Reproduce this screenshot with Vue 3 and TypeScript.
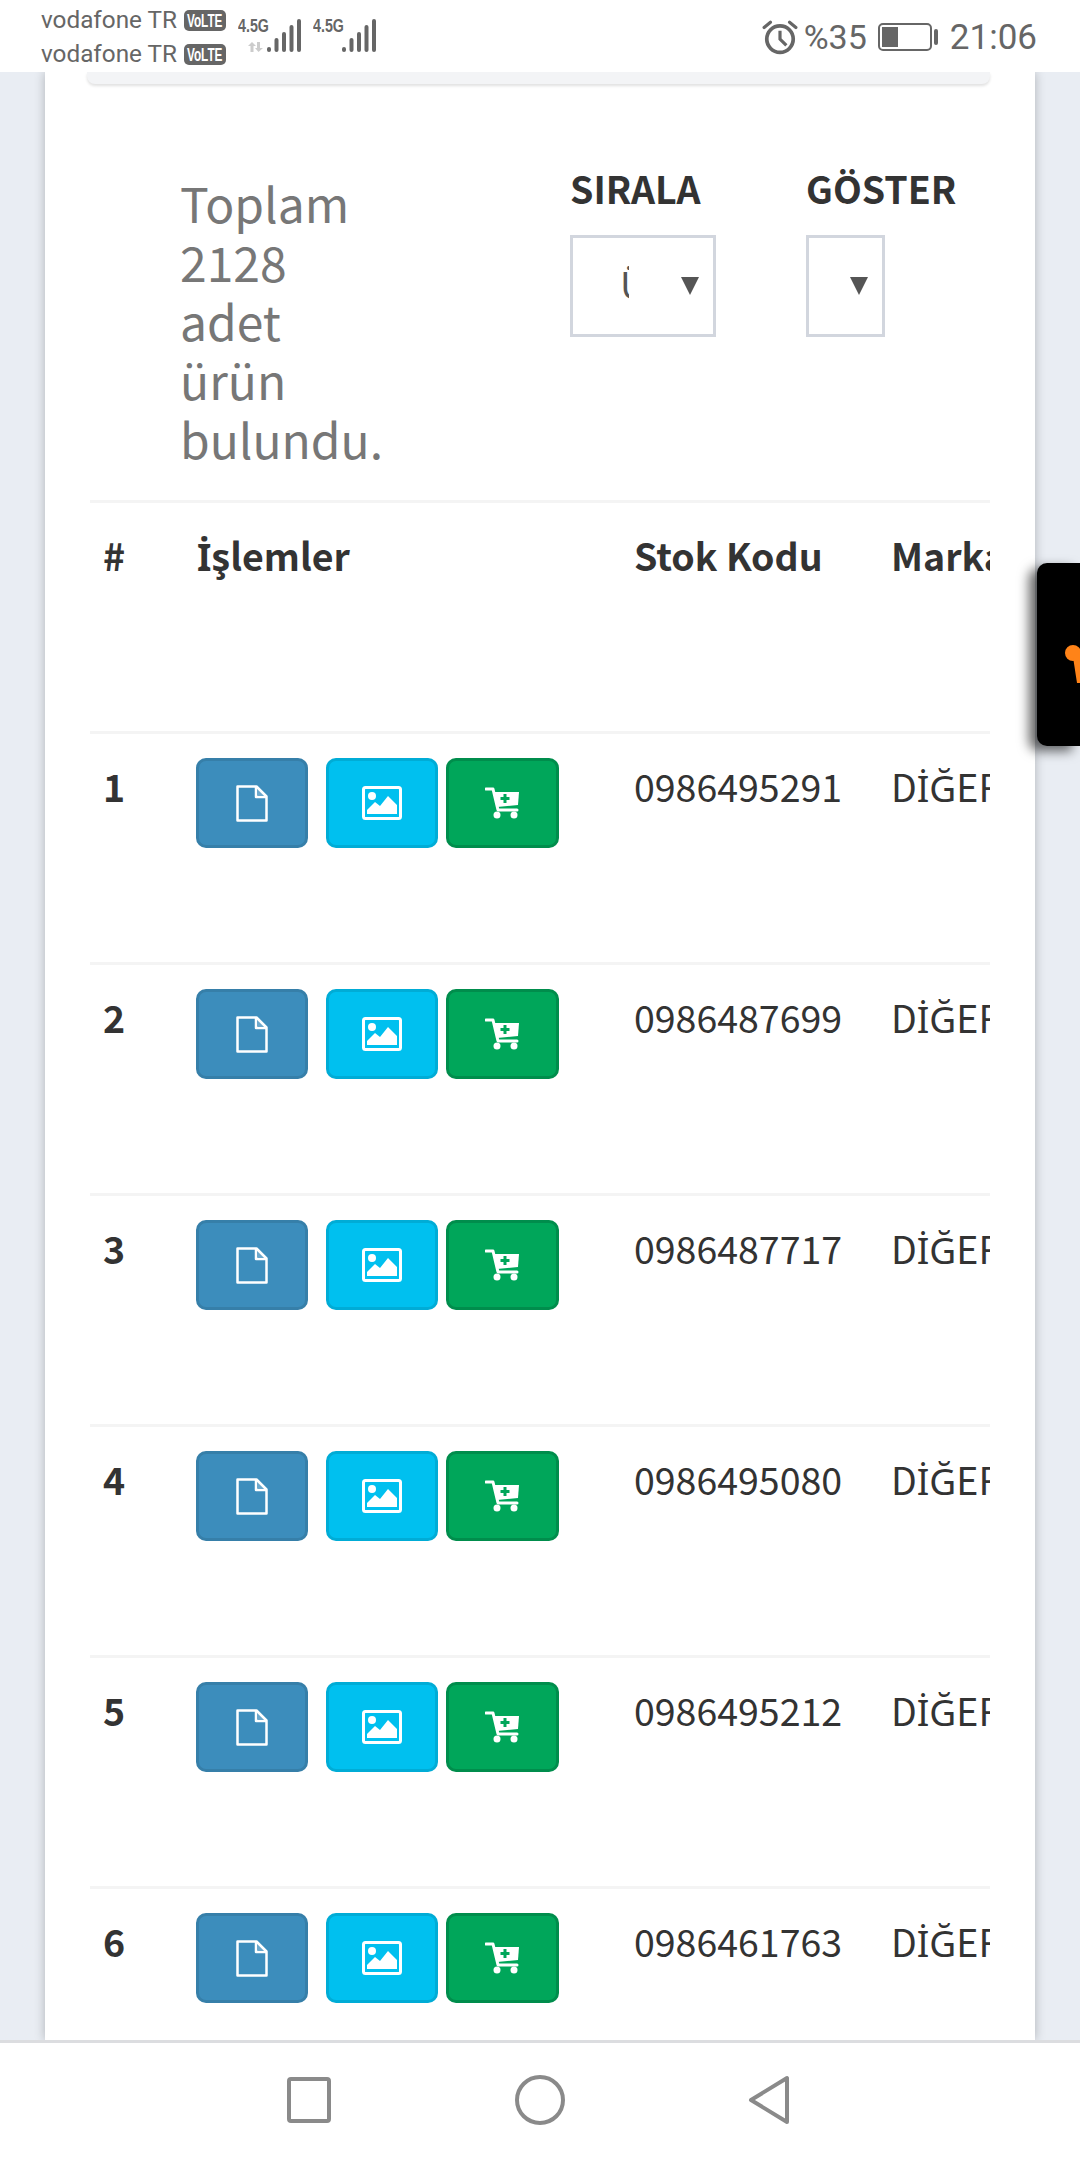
<script setup lang="ts">
const rows = [
  { no: 1, code: '0986495291' },
  { no: 2, code: '0986487699' },
  { no: 3, code: '0986487717' },
  { no: 4, code: '0986495080' },
  { no: 5, code: '0986495212' },
  { no: 6, code: '0986461763' }
];

const signalBars = [
  { x: 0, y: 28, h: 5 },
  { x: 7.5, y: 19, h: 14 },
  { x: 15, y: 13, h: 20 },
  { x: 22.5, y: 6, h: 27 },
  { x: 30, y: 0, h: 33 }
];
</script>

<template>
  <div class="screen">
    <header class="status-bar">
      <div class="carriers">
        <div class="carrier">vodafone TR <span class="volte"><span>VoLTE</span></span></div>
        <div class="carrier">vodafone TR <span class="volte"><span>VoLTE</span></span></div>
      </div>
      <div class="network">
        <span class="net-label">4.5G</span>
        <svg class="signal" width="34" height="33" viewBox="0 0 34 33">
          <rect v-for="b in signalBars" :key="b.x" :x="b.x" :y="b.y" width="4" :height="b.h" rx="2" fill="#666" />
        </svg>
        <svg class="updown" width="16" height="10" viewBox="0 0 16 10">
          <path d="M4 0 L8 4 H5.500 V10 H2.500 V4 H0 Z M9 0 H12 V6 H15 L10.500 10 L7 6 H9 Z" fill="#ccc" />
        </svg>
      </div>
      <div class="network">
        <span class="net-label">4.5G</span>
        <svg class="signal" width="34" height="33" viewBox="0 0 34 33">
          <rect v-for="b in signalBars" :key="b.x" :x="b.x" :y="b.y" width="4" :height="b.h" rx="2" fill="#666" />
        </svg>
      </div>
      <div class="status-right">
        <svg width="36" height="36" viewBox="0 0 34 34" fill="none" stroke="#666">
          <circle cx="17" cy="19" r="12.500" stroke-width="3.500" />
          <path d="M17 11 V19 L23 25" stroke-width="3" />
          <path d="M2 8 L8 3 M32 8 L26 3" stroke-width="3" stroke-linecap="round" />
        </svg>
        <span class="battery-text">%35</span>
        <div class="battery"><div class="battery-fill" style="width: 35%"></div></div>
        <div class="battery-nub"></div>
        <span class="clock">21:06</span>
      </div>
    </header>

    <main class="page">
      <section class="card">
        <div class="panel-end"></div>

        <div class="toolbar">
          <p class="total">Toplam 2128 adet ürün bulundu.</p>
          <div class="filter sort">
            <label>SIRALA</label>
            <div class="select">
              <span class="select-value">Ü</span>
              <span class="arrow"></span>
            </div>
          </div>
          <div class="filter show">
            <label>GÖSTER</label>
            <div class="select">
              <span class="arrow"></span>
            </div>
          </div>
        </div>

        <div class="table-wrap">
          <table>
            <colgroup>
              <col style="width: 92px" />
              <col style="width: 439px" />
              <col style="width: 257px" />
              <col style="width: 300px" />
            </colgroup>
            <thead>
              <tr>
                <th>#</th>
                <th class="actions-head"><span class="tr-glyph">İ</span>şlemler</th>
                <th>Stok Kodu</th>
                <th>Marka</th>
              </tr>
            </thead>
            <tbody>
              <tr v-for="row in rows" :key="row.no">
                <td class="no">{{ row.no }}</td>
                <td class="actions">
                  <div class="btn-group">
                    <button class="btn btn-doc">
                      <svg width="32" height="37" viewBox="0 0 32 37" fill="none" stroke="#fff" stroke-width="2.500" stroke-linejoin="round">
                        <path d="M1.500 1.500 H20.500 L30.500 11.500 V35.500 H1.500 Z" />
                        <path d="M20 2 V12 H30" />
                        <path d="M22 3.500 V10 H28.500 Z" fill="#fff" stroke="none" opacity=".25" />
                      </svg>
                    </button>
                    <button class="btn btn-image">
                      <svg width="40" height="34" viewBox="0 0 40 34" fill="none">
                        <rect x="1.500" y="1.500" width="37" height="31" rx="2" stroke="#fff" stroke-width="3" />
                        <circle cx="10" cy="10" r="4" fill="#fff" />
                        <path d="M5 28 V24 L13 16 L18 20 L26 10 L35 19 V28 Z" fill="#fff" />
                      </svg>
                    </button>
                    <button class="btn btn-cart">
                      <svg width="36" height="32" viewBox="0 0 36 32">
                        <path d="M1 2 H8 L13 23 H32" fill="none" stroke="#fff" stroke-width="3" stroke-linecap="round" stroke-linejoin="round" />
                        <path d="M8 5 H34 L33 18 L12 20 Z" fill="#fff" />
                        <path d="M20 7 V16 M15.500 11.500 H24.500" stroke="#00a65a" stroke-width="3" />
                        <circle cx="12" cy="28" r="3.500" fill="#fff" />
                        <circle cx="29" cy="28" r="3.500" fill="#fff" />
                      </svg>
                    </button>
                  </div>
                </td>
                <td>{{ row.code }}</td>
                <td>D<span class="tr-glyph">İĞ</span>ER</td>
              </tr>
            </tbody>
          </table>
        </div>
      </section>

      <aside class="side-tab">
        <div class="cone-ball"></div>
        <div class="cone"></div>
      </aside>
    </main>

    <nav class="nav-bar">
      <svg width="44" height="46" viewBox="0 0 44 46" fill="none" stroke="#8a8a8a" stroke-width="4">
        <rect x="2" y="2" width="40" height="42" rx="2" />
      </svg>
      <svg width="50" height="50" viewBox="0 0 50 50" fill="none" stroke="#8a8a8a" stroke-width="4">
        <circle cx="25" cy="25" r="23" />
      </svg>
      <svg width="42" height="50" viewBox="0 0 42 50" fill="none" stroke="#8a8a8a" stroke-width="4" stroke-linejoin="round">
        <path d="M39 3 V47 L3 25 Z" />
      </svg>
    </nav>
  </div>
</template>

<style scoped>
.screen {
  width: 1080px;
  height: 2160px;
  display: flex;
  flex-direction: column;
  overflow: hidden;
  background: #e9edf3;
  font-family: "Noto Sans CJK SC", "Noto Sans", sans-serif;
}

.status-bar {
  height: 72px;
  flex: none;
  display: flex;
  background: #fff;
  color: #666;
  font-family: Roboto, sans-serif;
  position: relative;
  z-index: 3;
}

.carriers {
  width: 197px;
  margin-left: 41px;
  padding-top: 3px;
}

.carrier {
  height: 34px;
  font-size: 24.300px;
  line-height: 34px;
  white-space: nowrap;
  display: flex;
  align-items: center;
  gap: 7px;
}

.volte {
  width: 42px;
  height: 21px;
  border-radius: 5px;
  background: #666;
  color: #fff;
  font-family: "Liberation Sans", sans-serif;
  font-size: 19px;
  font-weight: 700;
  line-height: 21px;
  display: flex;
  justify-content: center;
}

.volte span {
  display: block;
  transform: scaleX(0.62);
}

.network {
  width: 75px;
  position: relative;
  padding-top: 16px;
}

.net-label {
  font-family: "Liberation Sans", sans-serif;
  font-size: 19px;
  font-weight: 700;
  line-height: 20px;
  display: block;
  transform: scaleX(0.75);
  transform-origin: left;
}

.signal {
  position: absolute;
  left: 29px;
  top: 19px;
}

.updown {
  position: absolute;
  left: 10px;
  top: 42px;
}

.status-right {
  margin-left: auto;
  width: 330px;
  display: flex;
  align-items: center;
  padding: 2px 43px 0 0;
  box-sizing: border-box;
  justify-content: flex-end;
}

.battery-text {
  font-size: 34px;
  margin: 0 11px 0 6px;
}

.battery {
  width: 54px;
  height: 28px;
  border: 2px solid #666;
  border-radius: 5px;
  box-sizing: border-box;
  padding: 2px;
}

.battery-fill {
  height: 100%;
  background: #666;
}

.battery-nub {
  width: 4px;
  height: 16px;
  margin-left: 2px;
  background: #666;
  border-radius: 2px;
}

.clock {
  font-size: 35px;
  margin-left: 12px;
}

.page {
  flex: 1;
  min-height: 0;
  position: relative;
  padding: 0 45px;
}

.card {
  height: 100%;
  background: #fff;
  padding: 0 45px;
  box-shadow: 0 0 10px rgba(0, 0, 0, 0.25);
}

.panel-end {
  height: 12px;
  margin-left: -3px;
  background: #f3f4f6;
  border-radius: 0 0 8px 8px;
  box-shadow: 0 2px 3px rgba(0, 0, 0, 0.12);
}

.toolbar {
  height: 416px;
  box-sizing: border-box;
  display: flex;
  padding-top: 89px;
}

.total {
  width: 480px;
  margin: 0;
  padding: 0 180px 0 90px;
  box-sizing: border-box;
  font-size: 48px;
  line-height: 59px;
  color: #777;
}

.filter {
  margin-top: -11px;
}

.filter label {
  display: block;
  font-size: 37.500px;
  font-weight: 700;
  line-height: 52px;
  color: #333;
}

.sort {
  width: 236px;
}

.select {
  height: 102px;
  margin-top: 21px;
  border: 3px solid #d2d6de;
  box-sizing: border-box;
  position: relative;
}

.sort .select {
  width: 146px;
}

.show .select {
  width: 79px;
}

.select-value {
  position: absolute;
  left: 47px;
  top: 22px;
  width: 9px;
  overflow: hidden;
  font-size: 37px;
  line-height: 46px;
  color: #555;
}

.arrow {
  position: absolute;
  right: 14px;
  top: 39px;
  width: 0;
  height: 0;
  border-left: 9px solid transparent;
  border-right: 9px solid transparent;
  border-top: 18px solid #555;
}

.table-wrap {
  overflow: hidden;
}

table {
  width: 1088px;
  table-layout: fixed;
  border-collapse: separate;
  border-spacing: 0;
  color: #333;
}

th,
td {
  height: 231px;
  box-sizing: border-box;
  border-top: 3px solid #f4f4f4;
  padding: 26px 13px 0;
  vertical-align: top;
  text-align: left;
  font-size: 37.500px;
  line-height: 52px;
  white-space: nowrap;
}

th,
.no {
  font-weight: 700;
}

th.actions-head {
  padding-left: 15px;
}

/* the CJK face places the marks of these Turkish capitals badly */
.tr-glyph {
  font-family: "Noto Sans", sans-serif;
  font-size: 37px;
}

td.actions {
  padding: 24px 0 0 14px;
}

.btn-group {
  display: flex;
}

.btn {
  width: 112px;
  height: 90px;
  padding: 0;
  border-radius: 10px;
  border: 3px solid;
  display: flex;
  align-items: center;
  justify-content: center;
}

.btn-doc {
  background: #3c8dbc;
  border-color: #367fa9;
  margin-right: 18px;
}

.btn-image {
  background: #00c0ef;
  border-color: #00acd6;
  margin-right: 8px;
}

.btn-cart {
  width: 113px;
  background: #00a65a;
  border-color: #008d4c;
}

.side-tab {
  position: absolute;
  right: 0;
  top: 491px;
  width: 43px;
  height: 183px;
  background: #000;
  border-radius: 10px 0 0 10px;
  box-shadow: -8px 5px 12px rgba(0, 0, 0, 0.6);
  overflow: hidden;
}

.cone-ball {
  position: absolute;
  left: 28px;
  top: 82px;
  width: 16px;
  height: 16px;
  border-radius: 50%;
  background: #ff8318;
}

.cone {
  position: absolute;
  left: 36px;
  top: 94px;
  width: 10px;
  height: 26px;
  background: #ff8318;
  clip-path: polygon(0 0, 100% 0, 100% 100%, 40% 100%);
}

.nav-bar {
  height: 120px;
  flex: none;
  position: relative;
  z-index: 2;
  box-sizing: border-box;
  border-top: 3px solid #dcdde0;
  background: #fff;
  display: flex;
  align-items: center;
  padding: 0 0 3px 287px;
}

.nav-bar svg:nth-child(2) {
  margin-left: 184px;
}

.nav-bar svg:nth-child(3) {
  margin-left: 183px;
}
</style>

<style>
html,
body {
  margin: 0;
  background: #e9edf3;
}
</style>
